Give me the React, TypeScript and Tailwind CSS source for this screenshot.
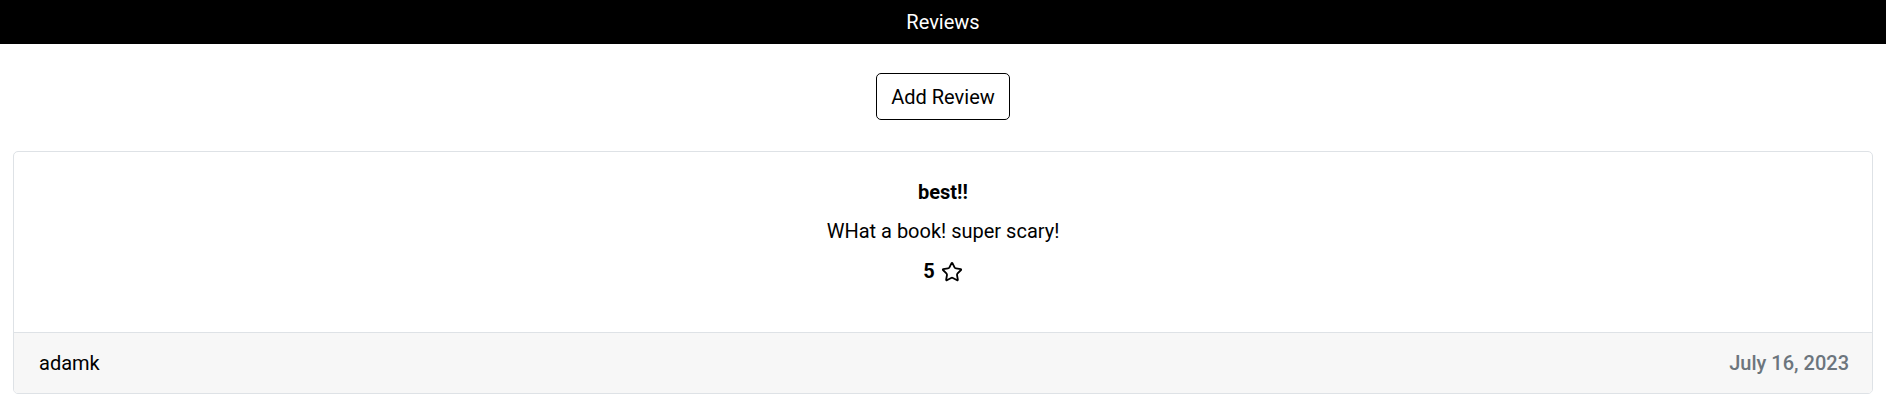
import { Star } from "lucide-react";

export default function App() {
  return (
    <div className="min-h-screen bg-white text-black font-['Roboto',sans-serif]">
      {/* Header */}
      <div className="bg-black h-[44px] flex items-center justify-center">
        <h1 className="text-white text-[20px] leading-none">Reviews</h1>
      </div>

      <div className="flex justify-center pt-[29px]">
        <button className="h-[47px] px-[14px] border border-black rounded-[5px] text-[20px] bg-white">
          Add Review
        </button>
      </div>

      {/* Review card */}
      <div className="mx-[13px] mt-[31px] border border-[#dee2e6] rounded-[5px] overflow-hidden">
        <div className="h-[180px] flex flex-col items-center pt-[27px]">
          <h5 className="font-bold text-[20px] leading-[27px]">best!!</h5>
          <p className="text-[20px] leading-[27px] mt-[12px]">WHat a book! super scary!</p>
          <div className="flex items-center gap-[6px] mt-[13px]">
            <span className="font-bold text-[20px] leading-[27px]">5</span>
            <Star size={22} strokeWidth={2} />
          </div>
        </div>
        <div className="h-[61px] bg-[#f7f7f7] border-t border-[#dee2e6] flex items-center justify-between pl-[25px] pr-[23px]">
          <span className="text-[20px]">adamk</span>
          <span className="text-[20px] font-medium text-[#6c757d]">July 16, 2023</span>
        </div>
      </div>
    </div>
  );
}
